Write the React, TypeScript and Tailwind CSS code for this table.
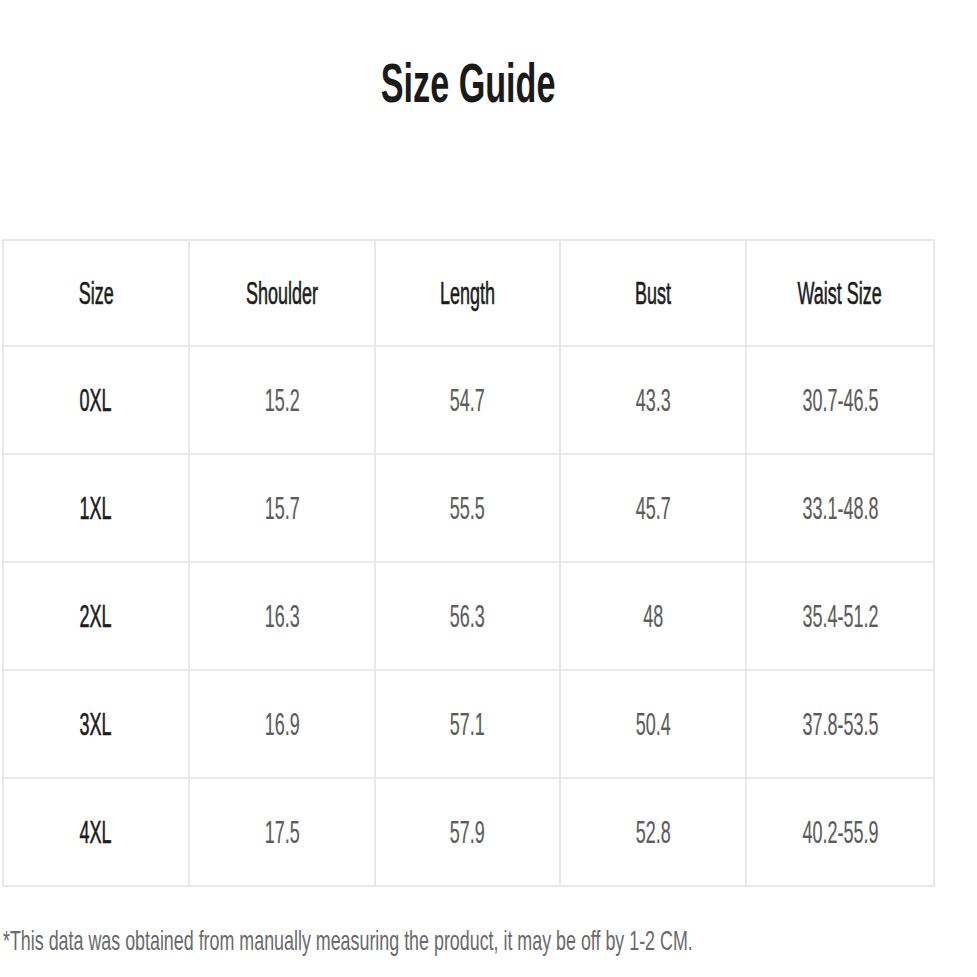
import React from 'react';

const headers = ['Size', 'Shoulder', 'Length', 'Bust', 'Waist Size'];

const rows = [
    ['0XL', '15.2', '54.7', '43.3', '30.7-46.5'],
    ['1XL', '15.7', '55.5', '45.7', '33.1-48.8'],
    ['2XL', '16.3', '56.3', '48', '35.4-51.2'],
    ['3XL', '16.9', '57.1', '50.4', '37.8-53.5'],
    ['4XL', '17.5', '57.9', '52.8', '40.2-55.9'],
];

// text in the picture is squeezed horizontally, so every label gets a scale-x
const Cell: React.FC<{ text: string; tone: 'head' | 'size' | 'data'; last: boolean }> = ({ text, tone, last }) => {
    const color =
        tone === 'data' ? 'text-[#5c5c5c] [-webkit-text-stroke:0.2px_#5c5c5c]' : 'text-[#1c1c1c] [-webkit-text-stroke:0.6px_#1c1c1c]';
    return (
        <div className={`flex items-center justify-center overflow-hidden ${last ? '' : 'border-r-2 border-[#e8e8e8]'}`}>
            <span className={`inline-block scale-x-[0.58] whitespace-nowrap text-[31px] leading-none ${color}`}>{text}</span>
        </div>
    );
};

export default function App() {
    return (
        <div className="min-h-[977px] w-[977px] bg-white font-['Liberation_Sans',Arial,sans-serif]">
            <div className="ml-[2px] flex w-[933px] flex-col">
                <h1 className="mt-[55px] flex justify-center">
                    <span className="inline-block scale-x-[0.61] whitespace-nowrap text-[56px] font-bold leading-none text-[#1a1a1a]">
                        Size Guide
                    </span>
                </h1>

                <div className="mt-[128px] border-2 border-[#e8e8e8]">
                    <div className="grid h-[106px] grid-cols-5 border-b-2 border-[#e8e8e8]">
                        {headers.map((h, i) => (
                            <Cell key={h} text={h} tone="head" last={i === headers.length - 1} />
                        ))}
                    </div>
                    {rows.map((r, ri) => (
                        <div
                            key={r[0]}
                            className={`grid grid-cols-5 ${ri === rows.length - 1 ? 'h-[106px]' : 'h-[108px] border-b-2 border-[#e8e8e8]'}`}
                        >
                            {r.map((v, i) => (
                                <Cell key={i} text={v} tone={i === 0 ? 'size' : 'data'} last={i === r.length - 1} />
                            ))}
                        </div>
                    ))}
                </div>

                <p className="ml-[1px] mt-[40px] origin-left scale-x-[0.638] whitespace-nowrap text-[28px] leading-none text-[#6a6a6a]">
                    *This data was obtained from manually measuring the product, it may be off by 1-2 CM.
                </p>
            </div>
        </div>
    );
}
